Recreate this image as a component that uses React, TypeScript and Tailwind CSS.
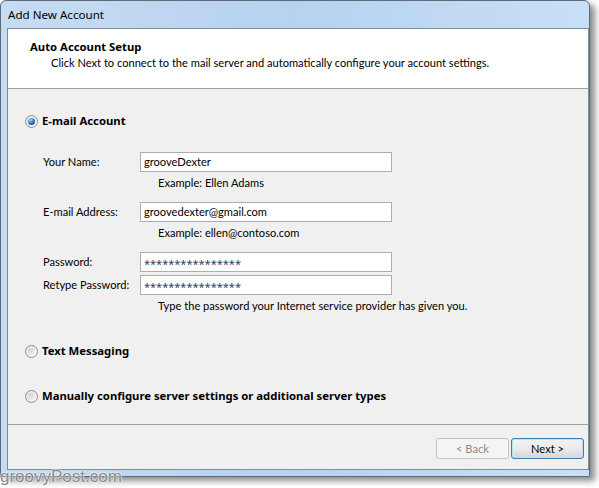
const regular = { fontFamily: 'Lato, "Noto Sans", sans-serif' };
const bold = { fontFamily: '"Noto Sans", "Open Sans", sans-serif' };

const Radio = ({ checked }: { checked?: boolean }) => (
    <span className="flex h-[13px] w-[13px] items-center justify-center rounded-full border border-[#8f8f8f] bg-gradient-to-br from-[#e2e2e2] to-[#fbfbfb]">
        <span className={checked
            ? "h-[7px] w-[7px] rounded-full bg-[radial-gradient(circle_at_35%_30%,#a6d4fa,#2a6fbf_55%,#0d2f6b)]"
            : "h-[7px] w-[7px] rounded-full bg-gradient-to-br from-[#cdcdcd] to-[#f3f3f3]"}/>
    </span>
);

const Option = ({ label, checked }: { label: string; checked?: boolean }) => (
    <div className="flex h-[16px] items-center gap-[4px] pl-[17px]">
        <Radio checked={checked}/>
        <span className="text-[11.3px] font-bold text-black" style={bold}>{label}</span>
    </div>
);

const Field = ({ label, value, secret }: { label: string; value: string; secret?: boolean }) => (
    <div className="flex h-[20px] items-center">
        <div className="w-[132px] whitespace-nowrap pl-[35px] text-black">{label}</div>
        <div className="flex h-[20px] w-[252px] items-center border border-[#abadb3] bg-white pl-[3px] text-black">
            {secret
                ? <span className="pt-[3px] text-[11px] text-[#2a3f66]" style={bold}>{value}</span>
                : value}
        </div>
    </div>
);

const App = () => {
    return (
        <div className="relative h-[488px] w-[599px] overflow-hidden bg-white text-[11.1px] leading-[14px]" style={regular}>
            <div className="flex h-[477px] w-[590px] flex-col rounded-t-[6px] border border-[#5c6a7a] bg-gradient-to-r from-[#c6dcf3] via-[#b6d2ef] to-[#c8e0f7] shadow-[5px_4px_6px_rgba(0,0,0,0.45)]">
                <div className="flex h-[27px] items-center pl-[7px] text-[11.6px] text-black" style={bold}>Add New Account</div>
                <div className="ml-[6px] flex flex-1 flex-col border border-[#7d8da0] bg-[#f0f0f0]">
                    <div className="h-[60px] border-b border-[#a0a0a0] bg-white pt-[11px]">
                        <div className="pl-[22px] text-[11.3px] font-bold text-black" style={bold}>Auto Account Setup</div>
                        <div className="mt-[2px] pl-[43px] text-black">Click Next to connect to the mail server and automatically configure your account settings.</div>
                    </div>

                    <div className="flex flex-1 flex-col">
                        <div className="mt-[24px]">
                            <Option label="E-mail Account" checked/>
                        </div>

                        <div className="mt-[23px]">
                            <Field label="Your Name:" value="grooveDexter"/>
                        </div>
                        <div className="mt-[4px] pl-[150px] text-black">Example: Ellen Adams</div>

                        <div className="mt-[12px]">
                            <Field label="E-mail Address:" value="groovedexter@gmail.com"/>
                        </div>
                        <div className="mt-[4px] pl-[150px] text-black">Example: ellen@contoso.com</div>

                        <div className="mt-[12px]">
                            <Field label="Password:" value="****************" secret/>
                        </div>
                        <div className="mt-[3px]">
                            <Field label="Retype Password:" value="****************" secret/>
                        </div>
                        <div className="mt-[4px] pl-[150px] text-black">Type the password your Internet service provider has given you.</div>

                        <div className="mt-[30px]">
                            <Option label="Text Messaging"/>
                        </div>
                        <div className="mt-[29px]">
                            <Option label="Manually configure server settings or additional server types"/>
                        </div>
                    </div>

                    <div className="mb-[13px] border-b border-[#a0a0a0]"/>
                    <div className="flex justify-end gap-[2px] pr-[4px] pb-[10px]">
                        <div className="flex h-[21px] w-[73px] items-center justify-center rounded-[3px] border border-[#c4c4c4] bg-[#f4f4f4] text-[#8d8d8d]">&lt; Back</div>
                        <div className="flex h-[21px] w-[73px] items-center justify-center rounded-[3px] border border-[#3c7fb1] bg-gradient-to-b from-[#f2f2f2] via-[#ebebeb] to-[#d6d6d6] text-black shadow-[inset_0_0_0_1px_#b8e3f8]">Next &gt;</div>
                    </div>
                </div>
                <div className="h-[6px]"/>
            </div>
            <div className="absolute left-0 top-[467px] text-[17px] leading-[20px] text-[#8a8a8a] [text-shadow:0_0_2px_#fff,0_0_2px_#fff]" style={{ fontFamily: '"Liberation Sans", Arial, sans-serif' }}>
                groovyPost.com
            </div>
        </div>
    );
};

export default App;
